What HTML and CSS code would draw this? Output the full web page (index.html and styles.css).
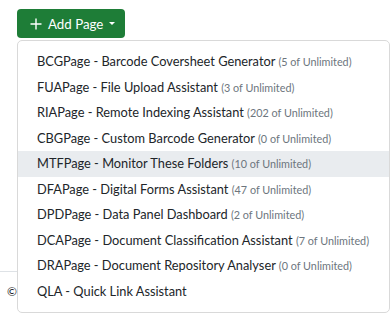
FILE: index.html
```html
<!DOCTYPE html>
<html lang="en">
<head>
    <meta charset="UTF-8">
    <meta name="viewport" content="width=device-width, initial-scale=1.0">
    <title>Pages</title>
    <link rel="stylesheet" href="styles.css">
</head>
<body>
    <div class="page">
        <div class="toolbar">
            <div class="dropdown">
                <button class="btn-add" type="button">
                    <svg class="plus" width="12" height="12" viewBox="0 0 12 12">
                        <path d="M6 0.5v11M0.5 6h11" stroke="#fff" stroke-width="1.4" fill="none"/>
                    </svg>
                    <span>Add Page</span>
                    <span class="caret"></span>
                </button>

                <ul class="dropdown-menu">
                    <li><a class="dropdown-item" href="#">BCGPage - Barcode Coversheet Generator <small>(5 of Unlimited)</small></a></li>
                    <li><a class="dropdown-item" href="#">FUAPage - File Upload Assistant <small>(3 of Unlimited)</small></a></li>
                    <li><a class="dropdown-item" href="#">RIAPage - Remote Indexing Assistant <small>(202 of Unlimited)</small></a></li>
                    <li><a class="dropdown-item" href="#">CBGPage - Custom Barcode Generator <small>(0 of Unlimited)</small></a></li>
                    <li><a class="dropdown-item active" href="#">MTFPage - Monitor These Folders <small>(10 of Unlimited)</small></a></li>
                    <li><a class="dropdown-item" href="#">DFAPage - Digital Forms Assistant <small>(47 of Unlimited)</small></a></li>
                    <li><a class="dropdown-item" href="#">DPDPage - Data Panel Dashboard <small>(2 of Unlimited)</small></a></li>
                    <li><a class="dropdown-item" href="#">DCAPage - Document Classification Assistant <small>(7 of Unlimited)</small></a></li>
                    <li><a class="dropdown-item" href="#">DRAPage - Document Repository Analyser <small>(0 of Unlimited)</small></a></li>
                    <li><a class="dropdown-item" href="#">QLA - Quick Link Assistant</a></li>
                </ul>
            </div>
        </div>

        <div class="content"></div>

        <footer class="footer">&copy;</footer>
    </div>
</body>
</html>
```

FILE: styles.css
```css
body {
    font-family: Lato, "Noto Sans", sans-serif;
    font-size: 14px;
    color: #212529;
    background-color: #fff;
    margin: 0;
    padding: 0;
}

.page {
    height: 318px;
    display: flex;
    flex-direction: column;
}

.toolbar {
    padding: 9px 0 0 17px;
}

.dropdown {
    position: relative;
    display: inline-block;
}

.btn-add {
    display: flex;
    align-items: center;
    height: 29px;
    padding: 0 10px 0 13px;
    background-color: #1e7d37;
    color: #fff;
    border: none;
    border-radius: 4px;
    font-family: inherit;
    font-size: 13.3px;
    cursor: pointer;
}

.plus {
    margin-right: 6px;
}

.caret {
    display: inline-block;
    margin-left: 6px;
    border-top: 3px solid #fff;
    border-left: 3px solid transparent;
    border-right: 3px solid transparent;
}

.dropdown-menu {
    position: absolute;
    top: 31px;
    left: 0;
    width: 373px;
    box-sizing: border-box;
    margin: 0;
    padding: 8px 0;
    list-style: none;
    background-color: #fff;
    border: 1px solid #d9d9d9;
    border-radius: 5px;
    z-index: 10;
}

.dropdown-item {
    display: block;
    height: 17.5px;
    padding: 4px 19px;
    line-height: 17.5px;
    font-size: 12.8px;
    color: #212529;
    text-decoration: none;
    white-space: nowrap;
}

.dropdown-item.active {
    background-color: #e9ecef;
}

.dropdown-item small {
    font-size: 10.8px;
    line-height: 1;
    color: #6c757d;
}

.content {
    flex: 1;
}

.footer {
    border-top: 1px solid #dee2e6;
    height: 47px;
    padding: 12px 0 0 7px;
    box-sizing: border-box;
    font-size: 12px;
    color: #212529;
}
```
